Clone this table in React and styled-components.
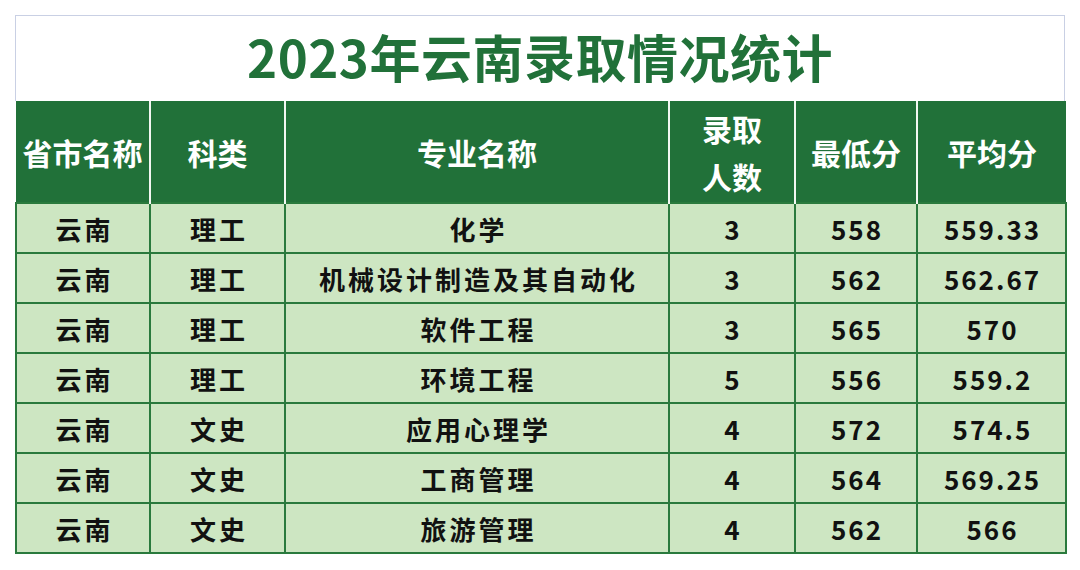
import React from "react";
import styled, { createGlobalStyle } from "styled-components";

const GlobalStyle = createGlobalStyle`
  html, body {
    margin: 0;
    padding: 0;
    background: #ffffff;
  }
  body {
    font-family: "Noto Sans CJK SC", "Noto Sans", sans-serif;
  }
`;

const Page = styled.div`
  width: 1080px;
  height: 570px;
  padding: 15px 0 0 15px;
  box-sizing: border-box;
`;

const Sheet = styled.div`
  width: 1050px;
`;

const TitleBox = styled.div`
  height: 86px;
  box-sizing: border-box;
  border: 1px solid #c9d0e4;
  border-bottom: none;
  display: flex;
  align-items: center;
  justify-content: center;
  padding-bottom: 6px;
  color: #217139;
  font-size: 51px;
  font-weight: 700;
  letter-spacing: 0.5px;
`;

const Table = styled.table`
  width: 1050px;
  border-collapse: collapse;
  table-layout: fixed;
`;

const HeadCell = styled.th`
  height: 101px;
  padding: 0;
  background: #217139;
  color: #ffffff;
  font-size: 30px;
  font-weight: 700;
  line-height: 48px;
  text-align: center;
  vertical-align: middle;
  border-left: 2px solid #f2f7f2;
  &:first-child {
    border-left: none;
  }
`;

const Cell = styled.td`
  height: 48px;
  padding: 0 0 0 ${(p) => (p.$numeric ? 2 : 3)}px;
  background: #cde6c2;
  color: #111111;
  font-size: 26px;
  font-weight: 700;
  letter-spacing: ${(p) => (p.$numeric ? 2 : 3)}px;
  text-align: center;
  vertical-align: middle;
  border: 2px solid #2a7a3d;
`;

const columns = [
  { title: "省市名称", width: 134 },
  { title: "科类", width: 135 },
  { title: "专业名称", width: 384 },
  { title: "录取\n人数", width: 126 },
  { title: "最低分", width: 122 },
  { title: "平均分", width: 149 },
];

const rows = [
  ["云南", "理工", "化学", "3", "558", "559.33"],
  ["云南", "理工", "机械设计制造及其自动化", "3", "562", "562.67"],
  ["云南", "理工", "软件工程", "3", "565", "570"],
  ["云南", "理工", "环境工程", "5", "556", "559.2"],
  ["云南", "文史", "应用心理学", "4", "572", "574.5"],
  ["云南", "文史", "工商管理", "4", "564", "569.25"],
  ["云南", "文史", "旅游管理", "4", "562", "566"],
];

export default function App() {
  return (
    <Page>
      <GlobalStyle />
      <Sheet>
        <TitleBox>2023年云南录取情况统计</TitleBox>
        <Table>
          <colgroup>
            {columns.map((c) => (
              <col key={c.title} style={{ width: c.width }} />
            ))}
          </colgroup>
          <thead>
            <tr>
              {columns.map((c) => (
                <HeadCell key={c.title}>
                  {c.title.split("\n").map((line) => (
                    <div key={line}>{line}</div>
                  ))}
                </HeadCell>
              ))}
            </tr>
          </thead>
          <tbody>
            {rows.map((r, i) => (
              <tr key={i}>
                {r.map((v, j) => (
                  <Cell key={j} $numeric={j > 2}>
                    {v}
                  </Cell>
                ))}
              </tr>
            ))}
          </tbody>
        </Table>
      </Sheet>
    </Page>
  );
}
